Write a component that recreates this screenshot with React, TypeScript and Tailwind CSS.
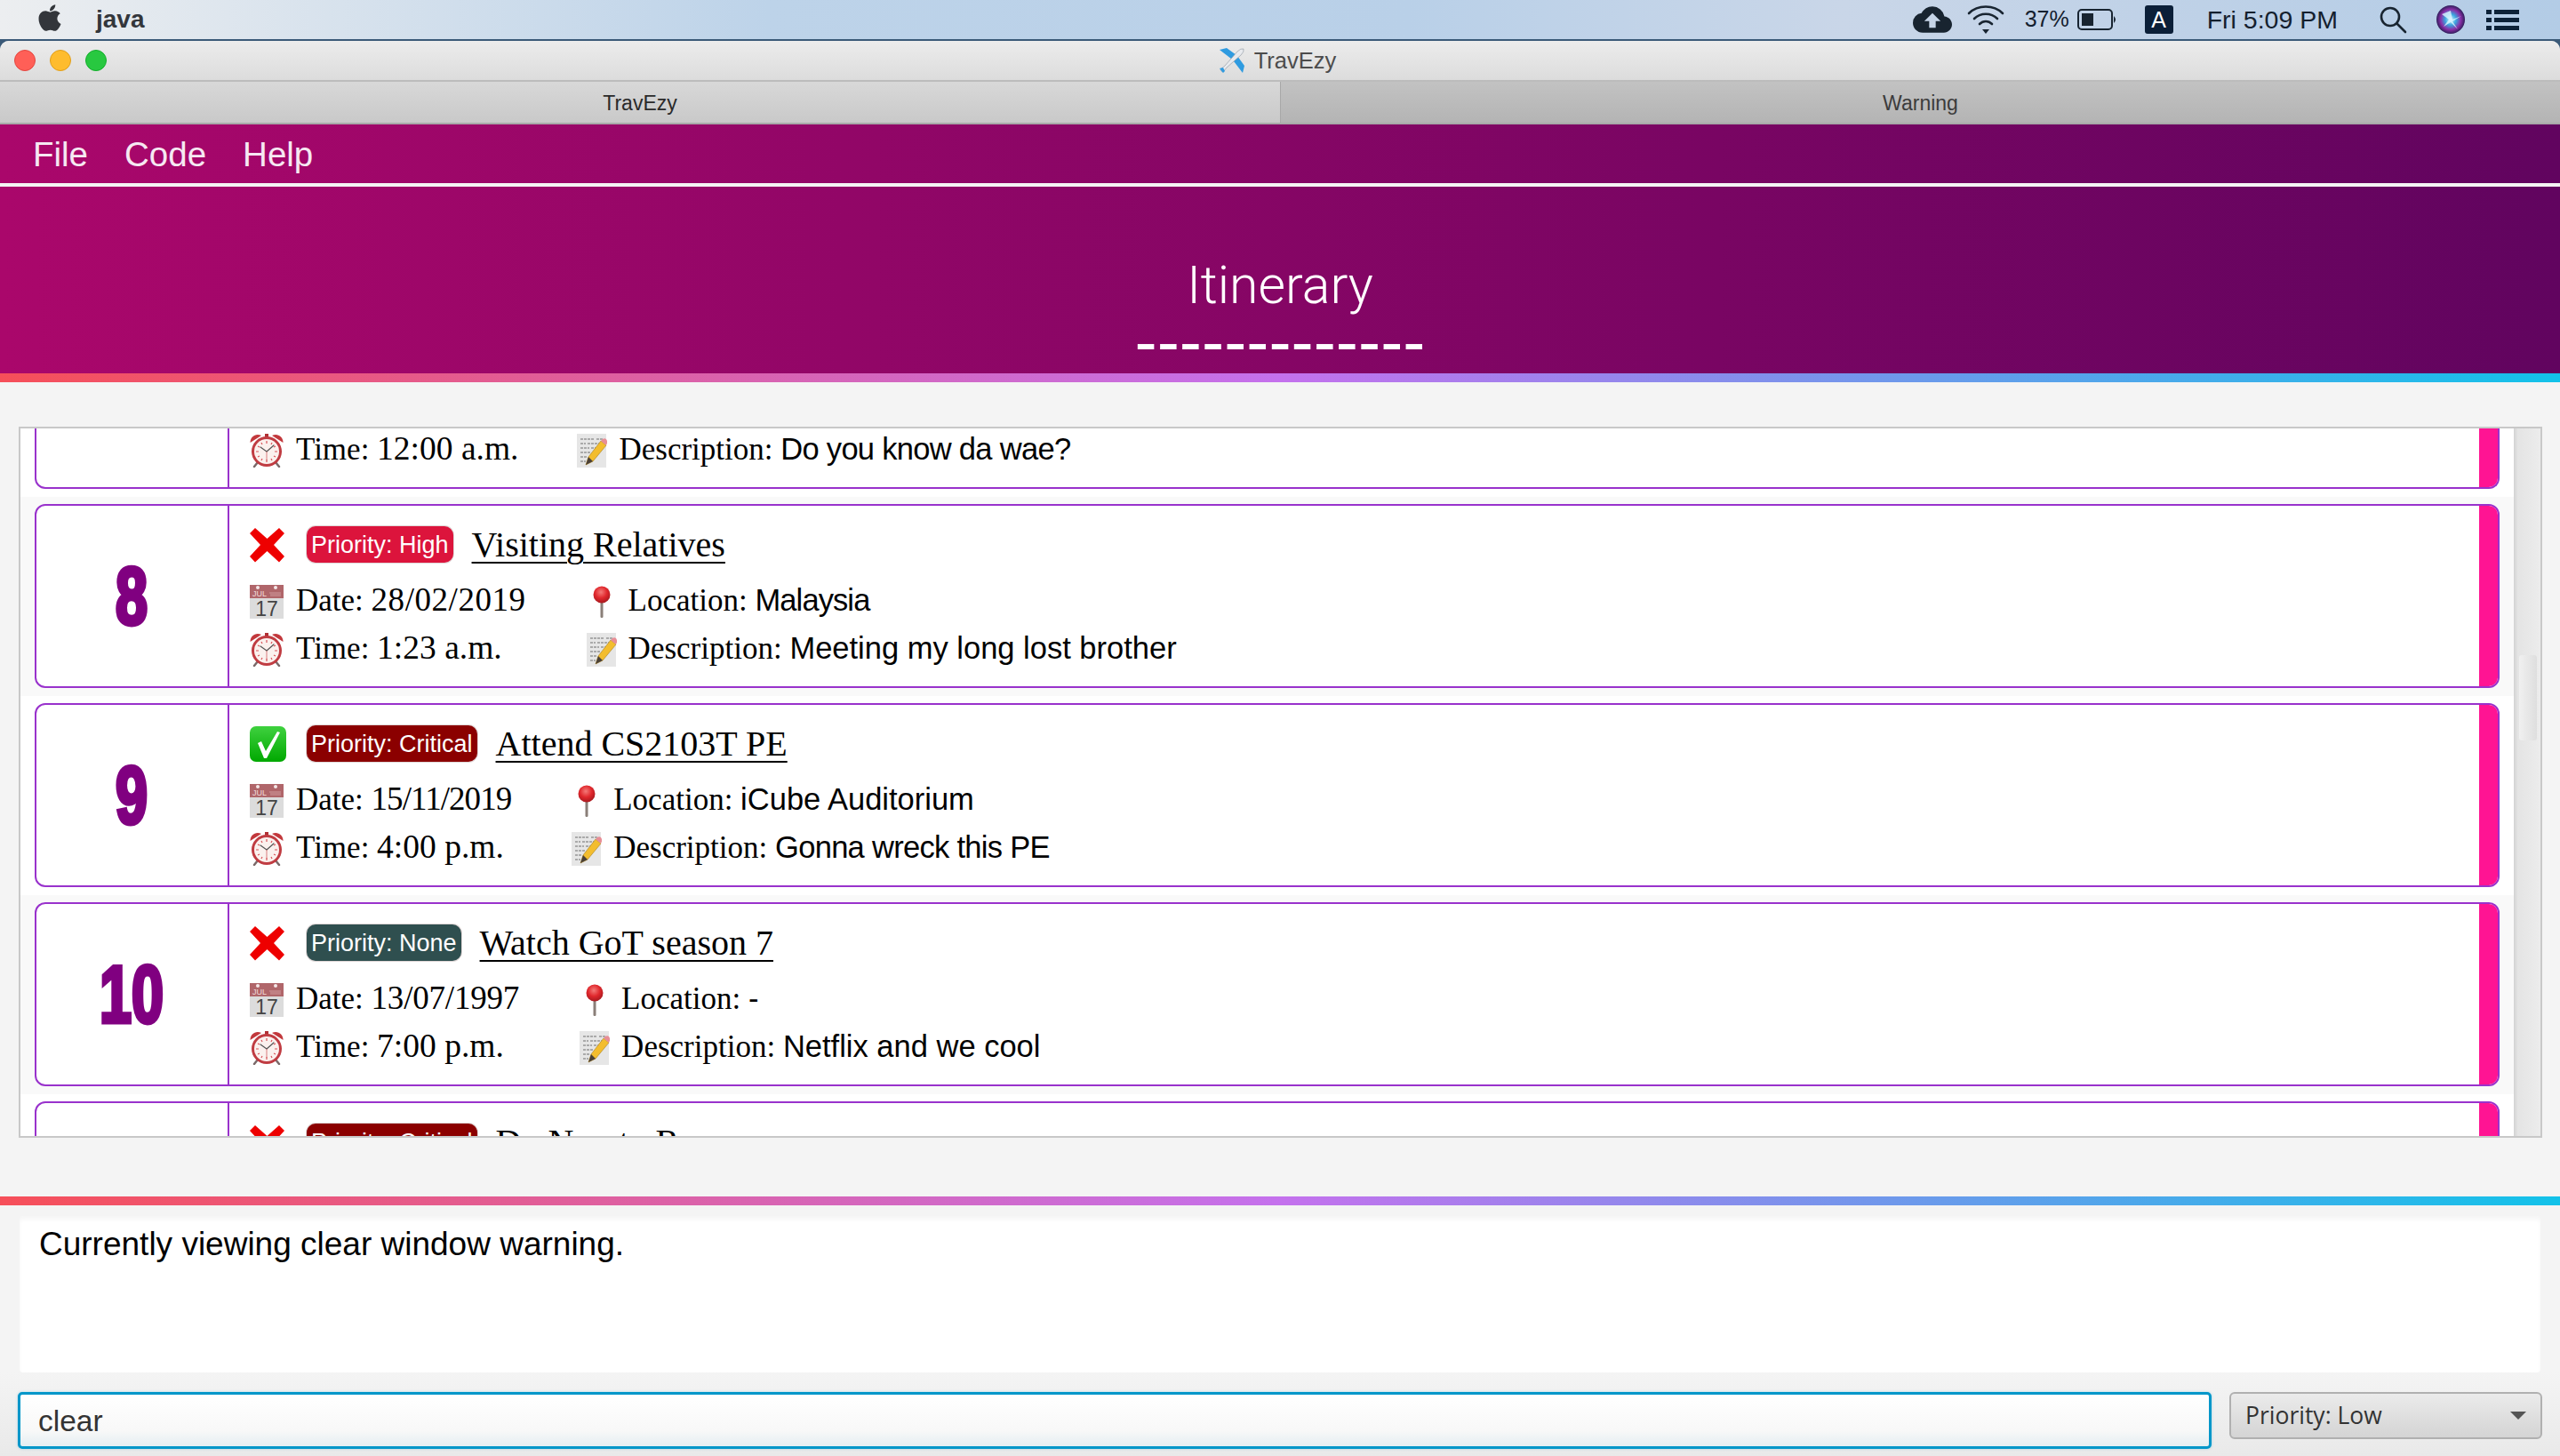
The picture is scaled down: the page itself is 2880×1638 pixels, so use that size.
import React from "react";
import { FaApple } from "react-icons/fa";
import { MdCloudUpload } from "react-icons/md";

const sans = "font-['Liberation_Sans',Arial,sans-serif]";
const serif = "font-['Liberation_Serif','Times_New_Roman',serif]";

function CrossIcon() {
  return (
    <svg width="39" height="40" viewBox="0 0 39 40" className="shrink-0">
      <path d="M6 1 L19.5 13 L33 1 L39 7 L27 20 L39 33 L33 39.5 L19.5 27 L6 39.5 L0 33 L12 20 L0 7 Z" fill="#ee0000" />
    </svg>
  );
}

function CheckIcon() {
  return (
    <svg width="41" height="40" viewBox="0 0 41 40" className="shrink-0">
      <defs>
        <linearGradient id="chk" x1="0" y1="0" x2="0" y2="1">
          <stop offset="0" stopColor="#3fd13f" />
          <stop offset="1" stopColor="#00a800" />
        </linearGradient>
      </defs>
      <rect x="0" y="0" width="41" height="40" rx="7" fill="url(#chk)" />
      <path d="M9 19 L13 17 L18 28 L31 6 L34 7 L19 36 L16 36 Z" fill="#ffffff" />
    </svg>
  );
}

function CalendarIcon() {
  return (
    <svg width="38" height="38" viewBox="0 0 38 38" className="shrink-0 overflow-visible">
      <rect x="0" y="14" width="38" height="24" fill="#dcdcdc" />
      <rect x="0" y="0" width="38" height="15" fill="#b0666a" />
      <circle cx="9" cy="3" r="2" fill="#f4e8e8" />
      <circle cx="29" cy="3" r="2" fill="#f4e8e8" />
      <text x="3" y="13" fontSize="9" fill="#f0dcdc" fontFamily="Liberation Sans">JUL</text>
      <path d="M22 9h1M24 8v5M26 8v5M28 8v5M30 8v5M32 8v5M34 8v5" stroke="#cf9a9c" strokeWidth="1" />
      <text x="19" y="35" textAnchor="middle" fontSize="23" fill="#444" fontFamily="Liberation Sans">17</text>
    </svg>
  );
}

function ClockIcon() {
  return (
    <svg width="38" height="38" viewBox="0 0 38 38" className="shrink-0">
      <path d="M9 32 L5 37 M29 32 L33 37" stroke="#7a6a6a" strokeWidth="2.5" strokeLinecap="round" />
      <path d="M0.5 10 C0.5 3 7 -1 13 2 Z" fill="#c2383c" />
      <path d="M37.5 10 C37.5 3 31 -1 25 2 Z" fill="#c2383c" />
      <rect x="17" y="0" width="4" height="4" fill="#b03034" />
      <circle cx="19" cy="20" r="17" fill="#c03c42" />
      <circle cx="19" cy="20" r="14" fill="#fbf1ee" />
      <path d="M19 8v3M19 29v3M7 20h3M28 20h3M13 10l1 2M25 10l-1 2M9 14l2 1M29 14l-2 1M9 26l2-1M29 26l-2-1M13 30l1-2M25 30l-1-2" stroke="#d8545a" strokeWidth="1.2" />
      <path d="M19 20 L12 15 M19 20 L27 13" stroke="#555" strokeWidth="1.2" strokeLinecap="round" />
      <path d="M19 20 V30" stroke="#d06060" strokeWidth="0.8" />
    </svg>
  );
}

function PinIcon() {
  return (
    <svg width="20" height="36" viewBox="0 0 20 36" className="shrink-0">
      <defs>
        <radialGradient id="pinball" cx="0.45" cy="0.35" r="0.65">
          <stop offset="0" stopColor="#f47a78" />
          <stop offset="0.55" stopColor="#e0272c" />
          <stop offset="1" stopColor="#a81a20" />
        </radialGradient>
      </defs>
      <rect x="8.5" y="17" width="3" height="19" rx="1.2" fill="#8a7f78" />
      <circle cx="10" cy="10" r="9.5" fill="url(#pinball)" />
    </svg>
  );
}

function NoteIcon() {
  return (
    <svg width="34" height="38" viewBox="0 0 34 38" className="shrink-0">
      <rect x="0" y="0" width="33" height="38" fill="#e6e6e6" />
      <path d="M4 6h15M22 6h7M4 11h6M12 11h14M4 16h10M16 16h10M4 21h12M4 26h8M4 31h6" stroke="#6e6e6e" strokeWidth="1" strokeDasharray="3 1" />
      <path d="M10 35 L13 26 L27 8 L33 13 L18 31 Z" fill="#f3bd2e" stroke="#a88020" strokeWidth="0.6" />
      <path d="M27 8 L29 6 Q31 4.5 33 6 L34 8 Q34.5 10 33 13 Z" fill="#e88e96" />
      <path d="M10 35 L13 26 L18 31 Z" fill="#4a4038" />
    </svg>
  );
}

function PlaneIcon() {
  return (
    <svg width="30" height="30" viewBox="0 0 30 30" className="shrink-0">
      <path d="M1 3 L9 1 L20 9 L14 13 Z" fill="#2f9be0" />
      <path d="M27 29 L29 21 L21 10 L17 16 Z" fill="#2f9be0" />
      <path d="M3 27 L2 25 L7 21 L21 5 Q25 1 28 2 Q29 5 25 9 L9 23 L5 28 Z" fill="#e8eaee" stroke="#8a949e" strokeWidth="0.6" />
      <path d="M1 24 L5 23 L7 27 L5 29 Z" fill="#2f9be0" />
    </svg>
  );
}

function Badge({ label, color }: { label: string; color: string }) {
  return (
    <span
      className={`${sans} ${color} text-white text-[27px] leading-[42px] h-[41px] px-[5px] rounded-[10px] whitespace-nowrap shadow-[0_0_0_1px_rgba(150,120,120,0.3)]`}
    >
      Priority: {label}
    </span>
  );
}

function Details({
  date, location, time, description, dateCls = "", descCls = "", locCls = "",
}: {
  date: string; location: string; time: string; description: string; dateCls?: string; descCls?: string; locCls?: string;
}) {
  return (
    <div className="grid grid-cols-[39px_auto_34px_auto] justify-start items-center gap-x-[13px] gap-y-[16px] auto-rows-[38px] text-black">
      <CalendarIcon />
      <Field cls="pr-[55px]" label="Date:" value={date} valueCls={`${serif} text-[37px] ${dateCls}`} />
      <div className="flex justify-center"><PinIcon /></div>
      <Field label="Location:" value={location} valueCls={`${sans} text-[34.5px] ${locCls}`} />
      <ClockIcon />
      <Field cls="pr-[55px]" label="Time:" value={time} valueCls={`${serif} text-[37.5px]`} />
      <NoteIcon />
      <Field label="Description:" value={description} valueCls={`${sans} text-[34.5px] ${descCls}`} />
    </div>
  );
}

function Field({ label, value, valueCls, cls = "" }: { label: string; value: string; valueCls: string; cls?: string }) {
  return (
    <div className={`${cls} whitespace-nowrap leading-[38px] pt-[2px]`}>
      <span className={`${serif} text-[35px]`}>{label} </span>
      <span className={valueCls}>{value}</span>
    </div>
  );
}

function Card({
  n, done, priority, color, title, alt, children,
}: {
  n?: string; done: boolean; priority: string; color: string; title: string; alt?: boolean; children?: React.ReactNode;
}) {
  return (
    <div className={`pt-[8px] pb-[9px] px-[16px] ${alt ? "bg-[#f9f9f9]" : "bg-white"}`}>
      <div className="flex h-[207px] bg-white border-2 border-[#9932cc] rounded-[12px] overflow-hidden">
        <div className="w-[217px] shrink-0 border-r-2 border-[#9932cc] flex items-center justify-center">
          {n ? (
            <span className="inline-block scale-x-[0.72] font-['Liberation_Sans',sans-serif] font-bold text-[#800080] text-[90px] leading-none [-webkit-text-stroke:5px_#800080]">
              {n}
            </span>
          ) : null}
        </div>
        <div className="flex-1 pl-[23px] pt-[23px]">
          <div className="flex items-center h-[41px] mb-[25px]">
            <div className="w-[64px]">{done ? <CheckIcon /> : <CrossIcon />}</div>
            <Badge label={priority} color={color} />
            <span className={`${serif} text-[40px] leading-[41px] underline underline-offset-[6px] decoration-2 ml-[21px] text-black whitespace-nowrap`}>
              {title}
            </span>
          </div>
          {children}
        </div>
        <div className="w-[21px] shrink-0 bg-[#ff1493]" />
      </div>
    </div>
  );
}

export default function App() {
  return (
    <div className={`${sans} w-[2880px] h-[1638px] overflow-hidden bg-[#3b5a78] flex flex-col`}>
      {/* macOS menu bar */}
      <div className="h-[44px] shrink-0 mb-[2px] flex items-center justify-between bg-[linear-gradient(90deg,#eceef0_0%,#bdd3e9_30%,#b9d0e8_55%,#c9d6e8_72%,#b3cce6_100%)] text-[#14202e]">
        <div className="flex items-center">
          <FaApple className="ml-[39px] text-[34px] text-[#33363b] -mt-[4px]" />
          <span className="ml-[35px] text-[28px] font-bold text-[#33363b]">java</span>
        </div>
        <div className="flex items-center text-[#14202e]">
          <MdCloudUpload className="text-[44px] text-[#182430]" />
          <svg width="42" height="34" viewBox="0 0 42 34" className="ml-[17px]" fill="none" stroke="#182430" strokeWidth="2.6" strokeLinecap="round">
            <path d="M2 10 C12 0 30 0 40 10" />
            <path d="M8 16 C15 9 27 9 34 16" />
            <path d="M14 22 C18 18 24 18 28 22" />
            <path d="M17 28 L25 28 L21 33 Z" fill="#182430" stroke="none" />
          </svg>
          <span className="ml-[23px] text-[25px]">37%</span>
          <svg width="46" height="24" viewBox="0 0 46 24" className="ml-[9px]">
            <rect x="1" y="1" width="38" height="22" rx="4" fill="none" stroke="#182430" strokeWidth="2" />
            <rect x="5" y="5" width="13" height="14" fill="#182430" />
            <path d="M41 8 Q45 12 41 16 Z" fill="#182430" />
          </svg>
          <span className="ml-[30px] w-[32px] h-[32px] rounded-[3px] bg-[#0b1f38] text-white text-[25px] leading-[32px] text-center">A</span>
          <span className="ml-[38px] text-[28.5px] whitespace-nowrap">Fri 5:09 PM</span>
          <svg width="32" height="32" viewBox="0 0 32 32" className="ml-[46px]" fill="none" stroke="#182430" strokeWidth="2.6" strokeLinecap="round">
            <circle cx="13" cy="13" r="10" />
            <path d="M21 21 L30 30" />
          </svg>
          <svg width="32" height="32" viewBox="0 0 32 32" className="ml-[33px]">
            <defs>
              <radialGradient id="siri" cx="0.5" cy="0.5" r="0.55">
                <stop offset="0" stopColor="#d8f4ff" />
                <stop offset="0.35" stopColor="#3aa7e0" />
                <stop offset="0.65" stopColor="#8a2fa8" />
                <stop offset="1" stopColor="#101840" />
              </radialGradient>
            </defs>
            <circle cx="16" cy="16" r="16" fill="url(#siri)" />
            <path d="M16 6 L18 16 L28 12 L18 18 L24 27 L16 19 L8 24 L14 16 L6 10 Z" fill="#dff6ff" opacity="0.8" />
          </svg>
          <svg width="37" height="30" viewBox="0 0 37 30" className="ml-[24px] mr-[46px]" fill="#0d2238">
            <rect x="0" y="4" width="6" height="5" />
            <rect x="9" y="4" width="28" height="5" />
            <rect x="0" y="13" width="6" height="5" />
            <rect x="9" y="13" width="28" height="5" />
            <rect x="0" y="22" width="6" height="5" />
            <rect x="9" y="22" width="28" height="5" />
          </svg>
        </div>
      </div>

      {/* window */}
      <div className="flex-1 flex flex-col bg-[#f4f4f4] rounded-t-[10px] overflow-hidden">
        <div className="h-[46px] shrink-0 relative flex items-center justify-center pr-[6px] bg-[linear-gradient(180deg,#ececec,#dcdcdc)] border-b-2 border-[#bcbcbc]">
          <div className="absolute left-[16px] top-[10px] flex gap-[16px]">
            <span className="w-[24px] h-[24px] rounded-full bg-[#ff5f57] border border-[#e2463f]" />
            <span className="w-[24px] h-[24px] rounded-full bg-[#febc2e] border border-[#e09e1a]" />
            <span className="w-[24px] h-[24px] rounded-full bg-[#28c840] border border-[#14ae2c]" />
          </div>
          <PlaneIcon />
          <span className="ml-[10px] text-[25.5px] text-[#4c4c4c] pt-[1px]">TravEzy</span>
        </div>
        <div className="h-[48px] shrink-0 flex border-b-2 border-[#a9a9a9] text-[23px]">
          <div className="w-[1440px] flex items-center justify-center pt-[2px] bg-[linear-gradient(180deg,#d8d8d8,#c9c9c9)] text-[#2a2a2a]">TravEzy</div>
          <div className="w-[1440px] flex items-center justify-center pt-[2px] bg-[linear-gradient(180deg,#c2c2c2,#b4b4b4)] text-[#3c3c3c] border-l border-[#a8a8a8]">Warning</div>
        </div>

        {/* header */}
        <div className="h-[280px] shrink-0 flex flex-col bg-[linear-gradient(90deg,#aa076b,#61045f)] text-white">
          <div className="h-[66px] flex items-center pl-[37px] gap-[41px] pt-[2px] text-[38.5px] text-[#f6e8f2]">
            <span>File</span>
            <span>Code</span>
            <span>Help</span>
          </div>
          <div className="h-[4px] bg-[#f4f4f4]" />
          <div className="flex-1 flex flex-col items-center">
            <span className="font-['Roboto',sans-serif] font-light text-[59px] leading-[70px] mt-[76px]">Itinerary</span>
            <span className="text-[75.5px] leading-[44px] mt-[6px] whitespace-nowrap">-------------</span>
          </div>
        </div>
        <div className="h-[10px] shrink-0 bg-[linear-gradient(90deg,#f64f59,#c471ed,#12c2e9)]" />

        {/* list */}
        <div className="mt-[50px] ml-[21px] mr-[20px] h-[800px] shrink-0 flex bg-white border-2 border-[#c8c8c8] overflow-hidden">
          <div className="flex-1 min-w-0 overflow-hidden">
            <div className="h-[77px] px-[16px] pb-[9px] bg-white">
              <div className="flex h-[68px] bg-white border-2 border-t-0 border-[#9932cc] rounded-b-[12px] overflow-hidden">
                <div className="w-[217px] shrink-0 border-r-2 border-[#9932cc]" />
                <div className="flex-1 pl-[23px] pt-[6px]">
                  <div className="grid grid-cols-[39px_auto_34px_auto] justify-start items-center gap-x-[13px] auto-rows-[38px]">
                    <ClockIcon />
                    <Field cls="pr-[53px]" label="Time:" value="12:00 a.m." valueCls={`${serif} text-[37.5px]`} />
                    <NoteIcon />
                    <Field label="Description:" value="Do you know da wae?" valueCls={`${sans} text-[34.5px] tracking-[-0.7px]`} />
                  </div>
                </div>
                <div className="w-[21px] shrink-0 bg-[#ff1493]" />
              </div>
            </div>
            <Card n="8" done={false} priority="High" color="bg-[#dc143c]" title="Visiting Relatives" alt>
              <Details date="28/02/2019" location="Malaysia" time="1:23 a.m." description="Meeting my long lost brother" dateCls="tracking-[0.55px]" locCls="tracking-[-0.9px]" />
            </Card>
            <Card n="9" done priority="Critical" color="bg-[#8b0000]" title="Attend CS2103T PE">
              <Details date="15/11/2019" location="iCube Auditorium" time="4:00 p.m." description="Gonna wreck this PE" dateCls="tracking-[-0.95px]" descCls="tracking-[-0.7px]" />
            </Card>
            <Card n="10" done={false} priority="None" color="bg-[#2f4f4f]" title="Watch GoT season 7" alt>
              <Details date="13/07/1997" location="-" time="7:00 p.m." description="Netflix and we cool" dateCls="tracking-[-0.2px]" />
            </Card>
            <Card done={false} priority="Critical" color="bg-[#8b0000]" title="Do Naruto Run" />
          </div>
          <div className="w-[30px] shrink-0 bg-[linear-gradient(90deg,#d2d2d2_0%,#e4e4e4_15%,#ececec_100%)] pt-[255px] pl-[6px]">
            <div className="w-[20px] h-[96px] rounded-[3px] bg-[linear-gradient(90deg,#f0f0f0,#dedede)]" />
          </div>
        </div>

        <div className="mt-[66px] h-[10px] shrink-0 bg-[linear-gradient(90deg,#f64f59,#c471ed,#12c2e9)]" />

        <div className="mt-[12px] ml-[22px] mr-[22px] h-[176px] shrink-0 bg-white rounded-[4px] shadow-[inset_0_4px_4px_rgba(0,0,0,0.04)] px-[22px] pt-[10px] text-[37px] leading-[44px] text-black">
          Currently viewing clear window warning.
        </div>

        <div className="flex-1 flex items-start pl-[20px] pr-[20px] pt-[22px] bg-[linear-gradient(180deg,#f4f4f4,#e9e9e9)]">
          <div className="flex-1 h-[64px] flex items-center rounded-[5px] border-[3px] border-[#0096c9] bg-[linear-gradient(180deg,#ffffff,#f8f8f8_70%,#e4eef2)] pl-[20px] pt-[2px] text-[33.5px] text-[#333] shadow-[0_0_3px_rgba(0,150,201,0.3)]">
            clear
          </div>
          <div className="w-[352px] ml-[20px] h-[53px] shrink-0 flex items-center justify-between rounded-[6px] border-2 border-[#b0b0b0] bg-[linear-gradient(180deg,#ebebeb,#d4d4d4)] pl-[16px] pr-[16px] text-[#333]">
            <span className="font-['Open_Sans',sans-serif] text-[26.5px]">Priority: Low</span>
            <span className="w-0 h-0 border-l-[9px] border-r-[9px] border-t-[9px] border-l-transparent border-r-transparent border-t-[#555]" />
          </div>
        </div>
      </div>
    </div>
  );
}
